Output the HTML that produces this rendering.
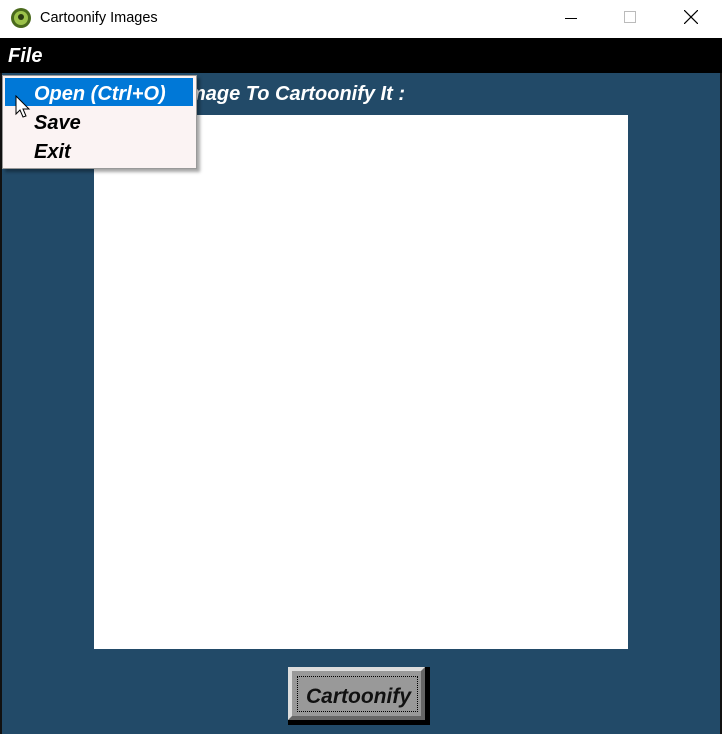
<!DOCTYPE html>
<html><head><style>
body{margin:0;width:722px;height:734px;overflow:hidden;background:#fff;font-family:"Liberation Sans",sans-serif;position:relative}
.a{position:absolute}
.b{font-weight:bold;font-style:italic}
</style></head><body>
<div class="a" style="left:0;top:0;width:722px;height:38px;background:#fff"></div>
<div class="a" style="left:11px;top:8px;width:20px;height:20px;border-radius:50%;background:#4a6a1c"></div>
<div class="a" style="left:14px;top:11px;width:14px;height:14px;border-radius:50%;background:#9cc24a"></div>
<div class="a" style="left:18px;top:14px;width:6px;height:6px;border-radius:50%;background:#2a3a10"></div>
<div class="a" style="left:40px;top:10px;font-size:14.5px;color:#000">Cartoonify Images</div>
<div class="a" style="left:565px;top:18px;width:12px;height:1px;background:#000"></div>
<div class="a" style="left:624px;top:11px;width:10px;height:10px;border:1px solid #bbb"></div>
<svg class="a" style="left:684px;top:10px" width="14" height="14"><path d="M0 0L14 14M14 0L0 14" stroke="#000" stroke-width="1.2"/></svg>
<div class="a" style="left:0;top:38px;width:722px;height:35px;background:#000"></div>
<div class="a b" style="left:8px;top:45px;font-size:20px;color:#fff">File</div>
<div class="a" style="left:0;top:73px;width:722px;height:661px;background:#224a68;border-left:2px solid #111;border-right:2px solid #111;box-sizing:border-box"></div>
<div class="a b" style="right:317px;top:83px;font-size:20px;color:#fff;white-space:nowrap">Select Image To Cartoonify It :</div>
<div class="a" style="left:94px;top:115px;width:534px;height:534px;background:#fff"></div>
<div class="a" style="left:288px;top:667px;width:142px;height:58px;background:#000"></div>
<div class="a" style="left:288px;top:667px;width:137px;height:53px;background:#999;border-top:4px solid #ddd;border-left:4px solid #ddd;border-right:4px solid #666;border-bottom:4px solid #666;box-sizing:border-box"></div>
<div class="a" style="left:297px;top:676px;width:121px;height:36px;border:1px dotted #000;box-sizing:border-box"></div>
<div class="a b" style="left:306px;top:685px;font-size:21px;color:#111">Cartoonify</div>
<div class="a" style="left:2px;top:75px;width:195px;height:94px;background:#fbf3f3;border:1px solid #999;box-sizing:border-box;box-shadow:3px 3px 3px rgba(0,0,0,.35)"></div>
<div class="a" style="left:5px;top:78px;width:188px;height:28px;background:#0078d7"></div>
<div class="a b" style="left:34px;top:83px;font-size:20px;color:#fff">Open (Ctrl+O)</div>
<div class="a b" style="left:34px;top:112px;font-size:20px;color:#000">Save</div>
<div class="a b" style="left:34px;top:141px;font-size:20px;color:#000">Exit</div>
<svg class="a" style="left:15px;top:95px" width="20" height="26"><path d="M1 1L1 19L5 15L8 22L11 21L8 14L14 14Z" fill="#fff" stroke="#000" stroke-width="1"/></svg>
</body></html>
